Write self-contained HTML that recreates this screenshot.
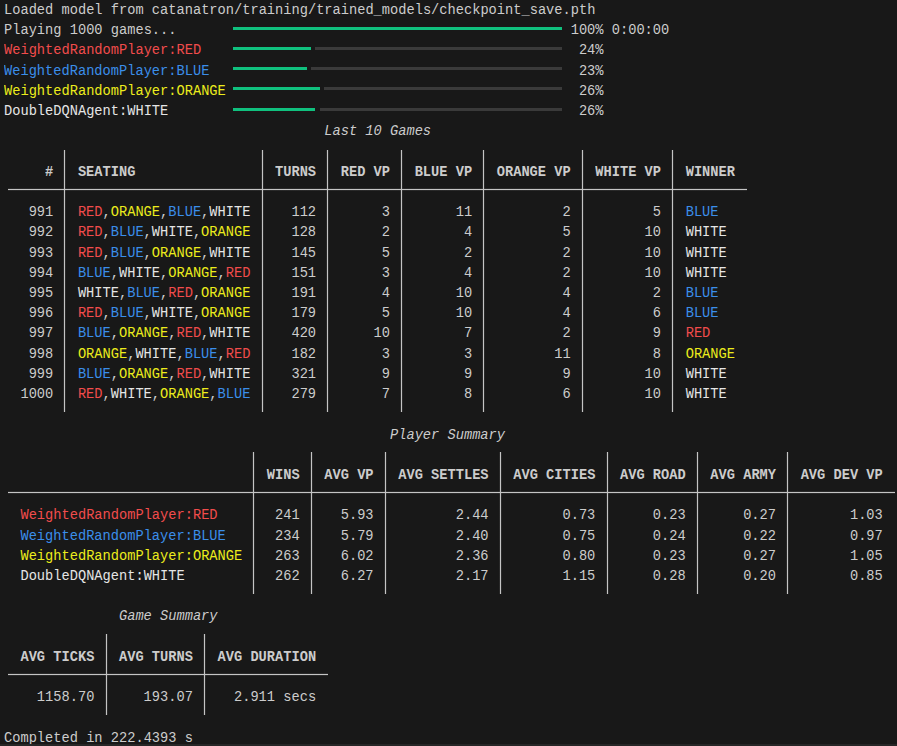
<!DOCTYPE html>
<html><head><meta charset="utf-8"><style>
html,body{margin:0;padding:0;}
body{width:897px;height:746px;overflow:hidden;background:#181818;position:relative;}
.t{position:absolute;white-space:pre;font-family:"Liberation Mono",monospace;font-size:13.69px;line-height:0;height:0;transform-origin:0 3.5px;transform:scaleY(1.08);}
.t.b{font-weight:bold;}
.t.i{font-style:italic;}
.r{position:absolute;}
.lv{background:linear-gradient(90deg,rgba(196,196,196,0.1) 33.3%,#c4c4c4 33.3%,#c4c4c4 66.7%,rgba(196,196,196,0.1) 66.7%);}
.lh{background:linear-gradient(180deg,rgba(196,196,196,0.1) 33.3%,#c4c4c4 33.3%,#c4c4c4 66.7%,rgba(196,196,196,0.1) 66.7%);}
</style></head><body>
<div class="t " style="left:4.00px;top:11.00px;color:#cccccc">Loaded model from catanatron/training/trained_models/checkpoint_save.pth</div>
<div class="t " style="left:4.00px;top:31.21px;color:#cccccc">Playing 1000 games...</div>
<div class="r" style="left:233.36px;top:26.89px;width:328.52px;height:3.00px;background:#10c07e"></div>
<div class="t " style="left:570.70px;top:31.21px;color:#cccccc">100% 0:00:00</div>
<div class="t " style="left:4.00px;top:51.43px;color:#f14c4c">WeightedRandomPlayer:RED</div>
<div class="r" style="left:233.36px;top:47.08px;width:78.02px;height:3.00px;background:#10c07e"></div>
<div class="r" style="left:315.49px;top:47.08px;width:246.39px;height:3.00px;background:#3a3a3a"></div>
<div class="t " style="left:578.91px;top:51.43px;color:#cccccc">24%</div>
<div class="t " style="left:4.00px;top:71.64px;color:#3b8eea">WeightedRandomPlayer:BLUE</div>
<div class="r" style="left:233.36px;top:67.27px;width:73.92px;height:3.00px;background:#10c07e"></div>
<div class="r" style="left:311.39px;top:67.27px;width:250.50px;height:3.00px;background:#3a3a3a"></div>
<div class="t " style="left:578.91px;top:71.64px;color:#cccccc">23%</div>
<div class="t " style="left:4.00px;top:91.86px;color:#ecec1c">WeightedRandomPlayer:ORANGE</div>
<div class="r" style="left:233.36px;top:87.45px;width:86.24px;height:3.00px;background:#10c07e"></div>
<div class="r" style="left:323.71px;top:87.45px;width:238.18px;height:3.00px;background:#3a3a3a"></div>
<div class="t " style="left:578.91px;top:91.86px;color:#cccccc">26%</div>
<div class="t " style="left:4.00px;top:112.08px;color:#e5e5e5">DoubleDQNAgent:WHITE</div>
<div class="r" style="left:233.36px;top:107.64px;width:82.13px;height:3.00px;background:#10c07e"></div>
<div class="r" style="left:319.60px;top:107.64px;width:242.28px;height:3.00px;background:#3a3a3a"></div>
<div class="t " style="left:578.91px;top:112.08px;color:#cccccc">26%</div>
<div class="t i" style="left:324.31px;top:132.29px;color:#cccccc">Last 10 Games</div>
<div class="r lv" style="left:63px;top:149.53px;width:3px;height:262.47px"></div>
<div class="r lv" style="left:261px;top:149.53px;width:3px;height:262.47px"></div>
<div class="r lv" style="left:326px;top:149.53px;width:3px;height:262.47px"></div>
<div class="r lv" style="left:400px;top:149.53px;width:3px;height:262.47px"></div>
<div class="r lv" style="left:482px;top:149.53px;width:3px;height:262.47px"></div>
<div class="r lv" style="left:581px;top:149.53px;width:3px;height:262.47px"></div>
<div class="r lv" style="left:671px;top:149.53px;width:3px;height:262.47px"></div>
<div class="r lh" style="left:7.51px;top:188px;width:739.17px;height:3px"></div>
<div class="t b" style="left:45.06px;top:172.72px;color:#cccccc">#</div>
<div class="t b" style="left:77.92px;top:172.72px;color:#cccccc">SEATING</div>
<div class="t b" style="left:275.03px;top:172.72px;color:#cccccc">TURNS</div>
<div class="t b" style="left:340.73px;top:172.72px;color:#cccccc">RED VP</div>
<div class="t b" style="left:414.65px;top:172.72px;color:#cccccc">BLUE VP</div>
<div class="t b" style="left:496.78px;top:172.72px;color:#cccccc">ORANGE VP</div>
<div class="t b" style="left:595.34px;top:172.72px;color:#cccccc">WHITE VP</div>
<div class="t b" style="left:685.68px;top:172.72px;color:#cccccc">WINNER</div>
<div class="t " style="left:28.64px;top:213.15px;color:#cccccc">991</div>
<div class="t " style="left:77.92px;top:213.15px;color:#f14c4c">RED</div>
<div class="t " style="left:102.56px;top:213.15px;color:#cccccc">,</div>
<div class="t " style="left:110.77px;top:213.15px;color:#ecec1c">ORANGE</div>
<div class="t " style="left:160.05px;top:213.15px;color:#cccccc">,</div>
<div class="t " style="left:168.26px;top:213.15px;color:#3b8eea">BLUE</div>
<div class="t " style="left:201.11px;top:213.15px;color:#cccccc">,</div>
<div class="t " style="left:209.32px;top:213.15px;color:#e5e5e5">WHITE</div>
<div class="t " style="left:291.45px;top:213.15px;color:#cccccc">112</div>
<div class="t " style="left:381.80px;top:213.15px;color:#cccccc">3</div>
<div class="t " style="left:455.71px;top:213.15px;color:#cccccc">11</div>
<div class="t " style="left:562.48px;top:213.15px;color:#cccccc">2</div>
<div class="t " style="left:652.83px;top:213.15px;color:#cccccc">5</div>
<div class="t " style="left:685.68px;top:213.15px;color:#3b8eea">BLUE</div>
<div class="t " style="left:28.64px;top:233.37px;color:#cccccc">992</div>
<div class="t " style="left:77.92px;top:233.37px;color:#f14c4c">RED</div>
<div class="t " style="left:102.56px;top:233.37px;color:#cccccc">,</div>
<div class="t " style="left:110.77px;top:233.37px;color:#3b8eea">BLUE</div>
<div class="t " style="left:143.62px;top:233.37px;color:#cccccc">,</div>
<div class="t " style="left:151.83px;top:233.37px;color:#e5e5e5">WHITE</div>
<div class="t " style="left:192.90px;top:233.37px;color:#cccccc">,</div>
<div class="t " style="left:201.11px;top:233.37px;color:#ecec1c">ORANGE</div>
<div class="t " style="left:291.45px;top:233.37px;color:#cccccc">128</div>
<div class="t " style="left:381.80px;top:233.37px;color:#cccccc">2</div>
<div class="t " style="left:463.93px;top:233.37px;color:#cccccc">4</div>
<div class="t " style="left:562.48px;top:233.37px;color:#cccccc">5</div>
<div class="t " style="left:644.61px;top:233.37px;color:#cccccc">10</div>
<div class="t " style="left:685.68px;top:233.37px;color:#e5e5e5">WHITE</div>
<div class="t " style="left:28.64px;top:253.58px;color:#cccccc">993</div>
<div class="t " style="left:77.92px;top:253.58px;color:#f14c4c">RED</div>
<div class="t " style="left:102.56px;top:253.58px;color:#cccccc">,</div>
<div class="t " style="left:110.77px;top:253.58px;color:#3b8eea">BLUE</div>
<div class="t " style="left:143.62px;top:253.58px;color:#cccccc">,</div>
<div class="t " style="left:151.83px;top:253.58px;color:#ecec1c">ORANGE</div>
<div class="t " style="left:201.11px;top:253.58px;color:#cccccc">,</div>
<div class="t " style="left:209.32px;top:253.58px;color:#e5e5e5">WHITE</div>
<div class="t " style="left:291.45px;top:253.58px;color:#cccccc">145</div>
<div class="t " style="left:381.80px;top:253.58px;color:#cccccc">5</div>
<div class="t " style="left:463.93px;top:253.58px;color:#cccccc">2</div>
<div class="t " style="left:562.48px;top:253.58px;color:#cccccc">2</div>
<div class="t " style="left:644.61px;top:253.58px;color:#cccccc">10</div>
<div class="t " style="left:685.68px;top:253.58px;color:#e5e5e5">WHITE</div>
<div class="t " style="left:28.64px;top:273.80px;color:#cccccc">994</div>
<div class="t " style="left:77.92px;top:273.80px;color:#3b8eea">BLUE</div>
<div class="t " style="left:110.77px;top:273.80px;color:#cccccc">,</div>
<div class="t " style="left:118.98px;top:273.80px;color:#e5e5e5">WHITE</div>
<div class="t " style="left:160.05px;top:273.80px;color:#cccccc">,</div>
<div class="t " style="left:168.26px;top:273.80px;color:#ecec1c">ORANGE</div>
<div class="t " style="left:217.54px;top:273.80px;color:#cccccc">,</div>
<div class="t " style="left:225.75px;top:273.80px;color:#f14c4c">RED</div>
<div class="t " style="left:291.45px;top:273.80px;color:#cccccc">151</div>
<div class="t " style="left:381.80px;top:273.80px;color:#cccccc">3</div>
<div class="t " style="left:463.93px;top:273.80px;color:#cccccc">4</div>
<div class="t " style="left:562.48px;top:273.80px;color:#cccccc">2</div>
<div class="t " style="left:644.61px;top:273.80px;color:#cccccc">10</div>
<div class="t " style="left:685.68px;top:273.80px;color:#e5e5e5">WHITE</div>
<div class="t " style="left:28.64px;top:294.01px;color:#cccccc">995</div>
<div class="t " style="left:77.92px;top:294.01px;color:#e5e5e5">WHITE</div>
<div class="t " style="left:118.98px;top:294.01px;color:#cccccc">,</div>
<div class="t " style="left:127.19px;top:294.01px;color:#3b8eea">BLUE</div>
<div class="t " style="left:160.05px;top:294.01px;color:#cccccc">,</div>
<div class="t " style="left:168.26px;top:294.01px;color:#f14c4c">RED</div>
<div class="t " style="left:192.90px;top:294.01px;color:#cccccc">,</div>
<div class="t " style="left:201.11px;top:294.01px;color:#ecec1c">ORANGE</div>
<div class="t " style="left:291.45px;top:294.01px;color:#cccccc">191</div>
<div class="t " style="left:381.80px;top:294.01px;color:#cccccc">4</div>
<div class="t " style="left:455.71px;top:294.01px;color:#cccccc">10</div>
<div class="t " style="left:562.48px;top:294.01px;color:#cccccc">4</div>
<div class="t " style="left:652.83px;top:294.01px;color:#cccccc">2</div>
<div class="t " style="left:685.68px;top:294.01px;color:#3b8eea">BLUE</div>
<div class="t " style="left:28.64px;top:314.23px;color:#cccccc">996</div>
<div class="t " style="left:77.92px;top:314.23px;color:#f14c4c">RED</div>
<div class="t " style="left:102.56px;top:314.23px;color:#cccccc">,</div>
<div class="t " style="left:110.77px;top:314.23px;color:#3b8eea">BLUE</div>
<div class="t " style="left:143.62px;top:314.23px;color:#cccccc">,</div>
<div class="t " style="left:151.83px;top:314.23px;color:#e5e5e5">WHITE</div>
<div class="t " style="left:192.90px;top:314.23px;color:#cccccc">,</div>
<div class="t " style="left:201.11px;top:314.23px;color:#ecec1c">ORANGE</div>
<div class="t " style="left:291.45px;top:314.23px;color:#cccccc">179</div>
<div class="t " style="left:381.80px;top:314.23px;color:#cccccc">5</div>
<div class="t " style="left:455.71px;top:314.23px;color:#cccccc">10</div>
<div class="t " style="left:562.48px;top:314.23px;color:#cccccc">4</div>
<div class="t " style="left:652.83px;top:314.23px;color:#cccccc">6</div>
<div class="t " style="left:685.68px;top:314.23px;color:#3b8eea">BLUE</div>
<div class="t " style="left:28.64px;top:334.44px;color:#cccccc">997</div>
<div class="t " style="left:77.92px;top:334.44px;color:#3b8eea">BLUE</div>
<div class="t " style="left:110.77px;top:334.44px;color:#cccccc">,</div>
<div class="t " style="left:118.98px;top:334.44px;color:#ecec1c">ORANGE</div>
<div class="t " style="left:168.26px;top:334.44px;color:#cccccc">,</div>
<div class="t " style="left:176.47px;top:334.44px;color:#f14c4c">RED</div>
<div class="t " style="left:201.11px;top:334.44px;color:#cccccc">,</div>
<div class="t " style="left:209.32px;top:334.44px;color:#e5e5e5">WHITE</div>
<div class="t " style="left:291.45px;top:334.44px;color:#cccccc">420</div>
<div class="t " style="left:373.58px;top:334.44px;color:#cccccc">10</div>
<div class="t " style="left:463.93px;top:334.44px;color:#cccccc">7</div>
<div class="t " style="left:562.48px;top:334.44px;color:#cccccc">2</div>
<div class="t " style="left:652.83px;top:334.44px;color:#cccccc">9</div>
<div class="t " style="left:685.68px;top:334.44px;color:#f14c4c">RED</div>
<div class="t " style="left:28.64px;top:354.65px;color:#cccccc">998</div>
<div class="t " style="left:77.92px;top:354.65px;color:#ecec1c">ORANGE</div>
<div class="t " style="left:127.19px;top:354.65px;color:#cccccc">,</div>
<div class="t " style="left:135.41px;top:354.65px;color:#e5e5e5">WHITE</div>
<div class="t " style="left:176.47px;top:354.65px;color:#cccccc">,</div>
<div class="t " style="left:184.69px;top:354.65px;color:#3b8eea">BLUE</div>
<div class="t " style="left:217.54px;top:354.65px;color:#cccccc">,</div>
<div class="t " style="left:225.75px;top:354.65px;color:#f14c4c">RED</div>
<div class="t " style="left:291.45px;top:354.65px;color:#cccccc">182</div>
<div class="t " style="left:381.80px;top:354.65px;color:#cccccc">3</div>
<div class="t " style="left:463.93px;top:354.65px;color:#cccccc">3</div>
<div class="t " style="left:554.27px;top:354.65px;color:#cccccc">11</div>
<div class="t " style="left:652.83px;top:354.65px;color:#cccccc">8</div>
<div class="t " style="left:685.68px;top:354.65px;color:#ecec1c">ORANGE</div>
<div class="t " style="left:28.64px;top:374.87px;color:#cccccc">999</div>
<div class="t " style="left:77.92px;top:374.87px;color:#3b8eea">BLUE</div>
<div class="t " style="left:110.77px;top:374.87px;color:#cccccc">,</div>
<div class="t " style="left:118.98px;top:374.87px;color:#ecec1c">ORANGE</div>
<div class="t " style="left:168.26px;top:374.87px;color:#cccccc">,</div>
<div class="t " style="left:176.47px;top:374.87px;color:#f14c4c">RED</div>
<div class="t " style="left:201.11px;top:374.87px;color:#cccccc">,</div>
<div class="t " style="left:209.32px;top:374.87px;color:#e5e5e5">WHITE</div>
<div class="t " style="left:291.45px;top:374.87px;color:#cccccc">321</div>
<div class="t " style="left:381.80px;top:374.87px;color:#cccccc">9</div>
<div class="t " style="left:463.93px;top:374.87px;color:#cccccc">9</div>
<div class="t " style="left:562.48px;top:374.87px;color:#cccccc">9</div>
<div class="t " style="left:644.61px;top:374.87px;color:#cccccc">10</div>
<div class="t " style="left:685.68px;top:374.87px;color:#e5e5e5">WHITE</div>
<div class="t " style="left:20.43px;top:395.08px;color:#cccccc">1000</div>
<div class="t " style="left:77.92px;top:395.08px;color:#f14c4c">RED</div>
<div class="t " style="left:102.56px;top:395.08px;color:#cccccc">,</div>
<div class="t " style="left:110.77px;top:395.08px;color:#e5e5e5">WHITE</div>
<div class="t " style="left:151.83px;top:395.08px;color:#cccccc">,</div>
<div class="t " style="left:160.05px;top:395.08px;color:#ecec1c">ORANGE</div>
<div class="t " style="left:209.32px;top:395.08px;color:#cccccc">,</div>
<div class="t " style="left:217.54px;top:395.08px;color:#3b8eea">BLUE</div>
<div class="t " style="left:291.45px;top:395.08px;color:#cccccc">279</div>
<div class="t " style="left:381.80px;top:395.08px;color:#cccccc">7</div>
<div class="t " style="left:463.93px;top:395.08px;color:#cccccc">8</div>
<div class="t " style="left:562.48px;top:395.08px;color:#cccccc">6</div>
<div class="t " style="left:644.61px;top:395.08px;color:#cccccc">10</div>
<div class="t " style="left:685.68px;top:395.08px;color:#e5e5e5">WHITE</div>
<div class="t i" style="left:390.01px;top:435.51px;color:#cccccc">Player Summary</div>
<div class="r lv" style="left:252px;top:452.38px;width:3px;height:141.33px"></div>
<div class="r lv" style="left:310px;top:452.38px;width:3px;height:141.33px"></div>
<div class="r lv" style="left:384px;top:452.38px;width:3px;height:141.33px"></div>
<div class="r lv" style="left:499px;top:452.38px;width:3px;height:141.33px"></div>
<div class="r lv" style="left:606px;top:452.38px;width:3px;height:141.33px"></div>
<div class="r lv" style="left:696px;top:452.38px;width:3px;height:141.33px"></div>
<div class="r lv" style="left:786px;top:452.38px;width:3px;height:141.33px"></div>
<div class="r lh" style="left:7.51px;top:491px;width:887.00px;height:3px"></div>
<div class="t b" style="left:266.82px;top:475.94px;color:#cccccc">WINS</div>
<div class="t b" style="left:324.31px;top:475.94px;color:#cccccc">AVG VP</div>
<div class="t b" style="left:398.22px;top:475.94px;color:#cccccc">AVG SETTLES</div>
<div class="t b" style="left:513.21px;top:475.94px;color:#cccccc">AVG CITIES</div>
<div class="t b" style="left:619.97px;top:475.94px;color:#cccccc">AVG ROAD</div>
<div class="t b" style="left:710.32px;top:475.94px;color:#cccccc">AVG ARMY</div>
<div class="t b" style="left:800.66px;top:475.94px;color:#cccccc">AVG DEV VP</div>
<div class="t " style="left:20.43px;top:516.38px;color:#f14c4c">WeightedRandomPlayer:RED</div>
<div class="t " style="left:275.03px;top:516.38px;color:#cccccc">241</div>
<div class="t " style="left:340.73px;top:516.38px;color:#cccccc">5.93</div>
<div class="t " style="left:455.71px;top:516.38px;color:#cccccc">2.44</div>
<div class="t " style="left:562.48px;top:516.38px;color:#cccccc">0.73</div>
<div class="t " style="left:652.83px;top:516.38px;color:#cccccc">0.23</div>
<div class="t " style="left:743.17px;top:516.38px;color:#cccccc">0.27</div>
<div class="t " style="left:849.94px;top:516.38px;color:#cccccc">1.03</div>
<div class="t " style="left:20.43px;top:536.59px;color:#3b8eea">WeightedRandomPlayer:BLUE</div>
<div class="t " style="left:275.03px;top:536.59px;color:#cccccc">234</div>
<div class="t " style="left:340.73px;top:536.59px;color:#cccccc">5.79</div>
<div class="t " style="left:455.71px;top:536.59px;color:#cccccc">2.40</div>
<div class="t " style="left:562.48px;top:536.59px;color:#cccccc">0.75</div>
<div class="t " style="left:652.83px;top:536.59px;color:#cccccc">0.24</div>
<div class="t " style="left:743.17px;top:536.59px;color:#cccccc">0.22</div>
<div class="t " style="left:849.94px;top:536.59px;color:#cccccc">0.97</div>
<div class="t " style="left:20.43px;top:556.80px;color:#ecec1c">WeightedRandomPlayer:ORANGE</div>
<div class="t " style="left:275.03px;top:556.80px;color:#cccccc">263</div>
<div class="t " style="left:340.73px;top:556.80px;color:#cccccc">6.02</div>
<div class="t " style="left:455.71px;top:556.80px;color:#cccccc">2.36</div>
<div class="t " style="left:562.48px;top:556.80px;color:#cccccc">0.80</div>
<div class="t " style="left:652.83px;top:556.80px;color:#cccccc">0.23</div>
<div class="t " style="left:743.17px;top:556.80px;color:#cccccc">0.27</div>
<div class="t " style="left:849.94px;top:556.80px;color:#cccccc">1.05</div>
<div class="t " style="left:20.43px;top:577.02px;color:#e5e5e5">DoubleDQNAgent:WHITE</div>
<div class="t " style="left:275.03px;top:577.02px;color:#cccccc">262</div>
<div class="t " style="left:340.73px;top:577.02px;color:#cccccc">6.27</div>
<div class="t " style="left:455.71px;top:577.02px;color:#cccccc">2.17</div>
<div class="t " style="left:562.48px;top:577.02px;color:#cccccc">1.15</div>
<div class="t " style="left:652.83px;top:577.02px;color:#cccccc">0.28</div>
<div class="t " style="left:743.17px;top:577.02px;color:#cccccc">0.20</div>
<div class="t " style="left:849.94px;top:577.02px;color:#cccccc">0.85</div>
<div class="t i" style="left:118.98px;top:617.45px;color:#cccccc">Game Summary</div>
<div class="r lv" style="left:105px;top:634.09px;width:3px;height:80.76px"></div>
<div class="r lv" style="left:203px;top:634.09px;width:3px;height:80.76px"></div>
<div class="r lh" style="left:7.51px;top:673px;width:320.31px;height:3px"></div>
<div class="t b" style="left:20.43px;top:657.88px;color:#cccccc">AVG TICKS</div>
<div class="t b" style="left:118.98px;top:657.88px;color:#cccccc">AVG TURNS</div>
<div class="t b" style="left:217.54px;top:657.88px;color:#cccccc">AVG DURATION</div>
<div class="t " style="left:36.85px;top:698.31px;color:#cccccc">1158.70</div>
<div class="t " style="left:143.62px;top:698.31px;color:#cccccc">193.07</div>
<div class="t " style="left:233.96px;top:698.31px;color:#cccccc">2.911 secs</div>
<div class="t " style="left:4.00px;top:738.74px;color:#cccccc">Completed in 222.4393 s</div>
<div class="r" style="left:0.00px;top:743.50px;width:897.00px;height:2.50px;background:#262626"></div>
</body></html>
